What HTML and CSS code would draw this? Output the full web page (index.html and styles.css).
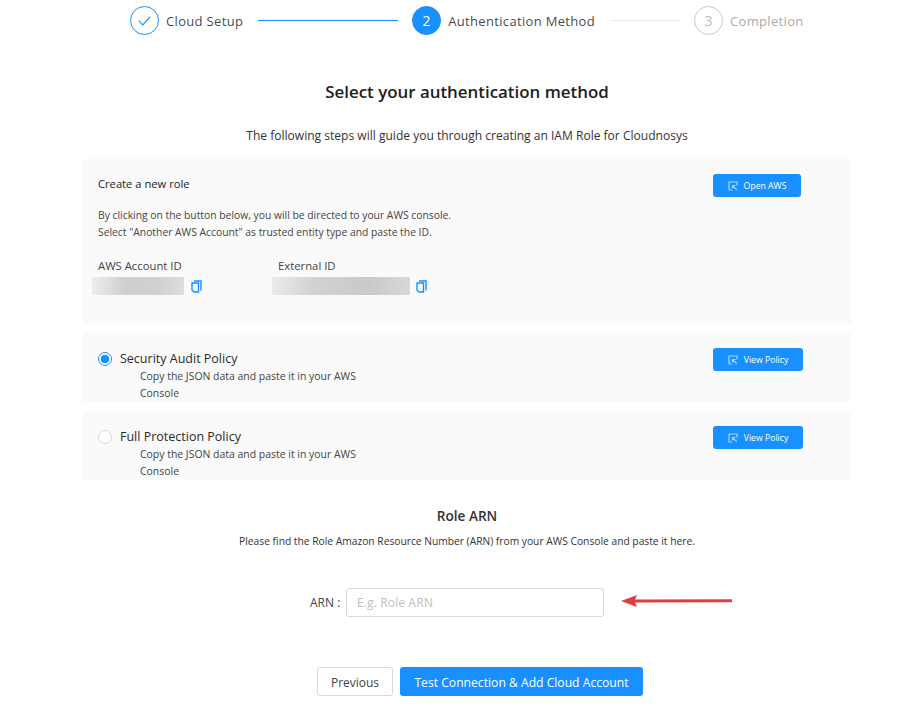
FILE: index.html
```html
<!DOCTYPE html>
<html lang="en">
<head>
<meta charset="utf-8">
<title>Select your authentication method</title>
<link rel="stylesheet" href="styles.css">
</head>
<body>
<div class="page">
  <div class="steps">
    <div class="step done">
      <span class="dot"><svg width="13" height="10" viewBox="0 0 13 10"><path d="M0.7 4.6 L4.8 8.8 L12.3 0.7" fill="none" stroke="#1890ff" stroke-width="1.2"/></svg></span>
      <span class="step-label">Cloud Setup</span>
    </div>
    <div class="line line-done"></div>
    <div class="step active">
      <span class="dot">2</span>
      <span class="step-label">Authentication Method</span>
    </div>
    <div class="line line-todo"></div>
    <div class="step todo">
      <span class="dot">3</span>
      <span class="step-label">Completion</span>
    </div>
  </div>

  <h1 class="title">Select your authentication method</h1>
  <p class="subtitle">The following steps will guide you through creating an IAM Role for Cloudnosys</p>

  <section class="panel panel-role">
    <div class="role-main">
      <h2 class="role-title">Create a new role</h2>
      <p class="role-text">By clicking on the button below, you will be directed to your AWS console.<br>Select "Another AWS Account" as trusted entity type and paste the ID.</p>
      <div class="ids">
        <div class="id-block id-account">
          <div class="id-label">AWS Account ID</div>
          <div class="id-value">
            <span class="masked masked-short"></span>
            <svg class="copy" width="11" height="13" viewBox="0 0 11 13"><path d="M3 1 H10 V10.5 M1 3 H7.5 V12 H3 L1 10 Z" fill="none" stroke="#1890ff" stroke-width="1.4"/></svg>
          </div>
        </div>
        <div class="id-block">
          <div class="id-label">External ID</div>
          <div class="id-value">
            <span class="masked masked-long"></span>
            <svg class="copy copy-ext" width="11" height="13" viewBox="0 0 11 13"><path d="M3 1 H10 V10.5 M1 3 H7.5 V12 H3 L1 10 Z" fill="none" stroke="#1890ff" stroke-width="1.4"/></svg>
          </div>
        </div>
      </div>
    </div>
    <button class="btn-small btn-aws"><svg width="10" height="10" viewBox="0 0 10 10"><path d="M4 9 H1 V1 H9 V4.5 M4.5 4.5 L8.8 8.8 M4.5 4.5 V7.5 M4.5 4.5 H7.5" fill="none" stroke="#a9d6ff" stroke-width="1.2"/></svg>Open AWS</button>
  </section>

  <section class="panel panel-policy">
    <span class="radio radio-on"></span>
    <div class="policy-body">
      <div class="policy-name">Security Audit Policy</div>
      <div class="policy-text">Copy the JSON data and paste it in your AWS<br>Console</div>
    </div>
    <button class="btn-small btn-policy"><svg width="10" height="10" viewBox="0 0 10 10"><path d="M4 9 H1 V1 H9 V4.5 M4.5 4.5 L8.8 8.8 M4.5 4.5 V7.5 M4.5 4.5 H7.5" fill="none" stroke="#a9d6ff" stroke-width="1.2"/></svg>View Policy</button>
  </section>

  <section class="panel panel-policy">
    <span class="radio"></span>
    <div class="policy-body">
      <div class="policy-name">Full Protection Policy</div>
      <div class="policy-text">Copy the JSON data and paste it in your AWS<br>Console</div>
    </div>
    <button class="btn-small btn-policy"><svg width="10" height="10" viewBox="0 0 10 10"><path d="M4 9 H1 V1 H9 V4.5 M4.5 4.5 L8.8 8.8 M4.5 4.5 V7.5 M4.5 4.5 H7.5" fill="none" stroke="#a9d6ff" stroke-width="1.2"/></svg>View Policy</button>
  </section>

  <h2 class="arn-title">Role ARN</h2>
  <p class="arn-text">Please find the Role Amazon Resource Number (ARN) from your AWS Console and paste it here.</p>

  <div class="arn-row">
    <label class="arn-label" for="arn">ARN :</label>
    <input class="arn-input" id="arn" type="text" placeholder="E.g. Role ARN">
    <svg class="arrow" width="114" height="14" viewBox="0 0 114 14"><path d="M1 7 L17 1 L15 5.4 L112 5.2 V8.2 L15 8.6 L17 13 Z" fill="#e23d3d"/></svg>
  </div>

  <div class="actions">
    <button class="btn btn-default">Previous</button>
    <button class="btn btn-primary">Test Connection &amp; Add Cloud Account</button>
  </div>
</div>
</body>
</html>
```
FILE: styles.css
```css
* { box-sizing: border-box; }
html, body { margin: 0; background: #fff; }
body {
  font-family: "Open Sans", "Noto Sans", "Liberation Sans", sans-serif;
  color: rgba(0, 0, 0, 0.75);
  font-size: 10px;
  overflow: hidden;
}
.page { width: 919px; height: 711px; padding: 6px 68px 0 83px; }

.steps { display: flex; align-items: center; height: 29px; padding-left: 47px; }
.step { display: flex; align-items: center; gap: 7px; font-size: 13px; letter-spacing: 0.33px; }
.dot {
  width: 29px; height: 29px; border-radius: 50%;
  display: flex; align-items: center; justify-content: center;
  border: 1px solid #1890ff; font-size: 14px;
}
.step.active .dot { background: #1890ff; color: #fff; }
.step.todo .dot { border-color: #c9c9c9; color: #bdbdbd; }
.step.todo .step-label { color: #a9a9a9; }
.line { height: 1px; }
.line-done { width: 140px; background: #1890ff; margin: 0 14px 0 15px; }
.line-todo { width: 69px; background: #e8e8e8; margin: 0 14px 0 16px; }

.title { margin: 46px 0 0; text-align: center; font-size: 16.9px; line-height: 22px; font-weight: 600; color: #1c1c1c; }
.subtitle { margin: 25px 0 0; text-align: center; font-size: 12.05px; line-height: 16px; color: #333; }

.panel { width: 768px; background: #fafafa; display: flex; align-items: flex-start; }
.panel-role { margin-top: 15px; height: 165px; padding: 17px 50px 0 15px; }
.role-main { flex: 1; }
.role-title { margin: 0; font-size: 11.2px; line-height: 16px; font-weight: 400; color: #222; }
.role-text { margin: 15px 0 0; font-size: 10.33px; line-height: 17px; color: #444; }
.ids { display: flex; margin-top: 17px; }
.id-block { width: 180px; }
.id-account { flex: none; }
.id-label { font-size: 11.3px; line-height: 16px; color: #444; }
.id-value { display: flex; align-items: center; gap: 7px; margin-left: -6px; margin-top: 3px; height: 18px; }
.masked { display: block; height: 18px; }
.masked-short { width: 92px; background: linear-gradient(90deg, #eeeeee, #cfcfcf 35%, #d0d0d0 70%, #dedede); }
.masked-long { width: 138px; background: linear-gradient(90deg, #ebebeb, #d2d2d2 30%, #c9c9c9 70%, #d8d8d8); }
.copy { flex: none; }
.copy-ext { margin-left: -1px; }

.btn-small {
  display: flex; align-items: center; justify-content: center; gap: 6px;
  width: 88px; height: 23px; padding: 1px 0 0;
  background: #1890ff; color: #fff; border: 0; border-radius: 3px;
  font-family: inherit; font-size: 8.7px;
}
.btn-aws { margin-top: -2px; }
.btn-policy { width: 90px; }

.panel-policy { height: 69px; padding: 15px 48px 0 15px; }
.panel-policy + .panel-policy { margin-top: 9px; }
.panel-role + .panel-policy { margin-top: 9px; }
.radio {
  flex: none; width: 14px; height: 14px; margin-top: 4px; border-radius: 50%;
  background: #fff; border: 1px solid #d9d9d9;
}
.radio-on { border-color: #1890ff; background: radial-gradient(circle, #1890ff 0 4px, #fff 4.6px); }
.policy-body { flex: 1; margin-left: 8px; padding-top: 1px; }
.policy-name { font-size: 12.5px; line-height: 19px; color: #2b2b2b; }
.policy-text { margin-left: 20px; font-size: 10.45px; line-height: 17px; color: #444; }

.arn-title { margin: 27px 0 0; text-align: center; font-size: 13.6px; line-height: 18px; font-weight: 600; color: #333; }
.arn-text { margin: 9px 0 0; text-align: center; font-size: 10.25px; line-height: 14px; color: #333; }

.arn-row { display: flex; align-items: center; margin: 40px 0 0 227px; height: 29px; }
.arn-label { width: 36px; font-size: 12px; color: #444; }
.arn-input {
  width: 258px; height: 29px; padding: 0 10px;
  border: 1px solid #d9d9d9; border-radius: 3px; background: #fff;
  font-family: inherit; font-size: 12.3px; outline: none;
}
.arn-input::placeholder { color: #bfbfbf; }
.arrow { margin-left: 16px; margin-top: -4px; }

.actions { display: flex; gap: 7px; margin: 50px 0 0 234px; }
.btn {
  height: 29px; border-radius: 3px; padding: 1px 0 0; font-family: inherit; font-size: 12.15px;
}
.btn-default { width: 76px; background: #fff; border: 1px solid #d9d9d9; color: #444; font-size: 12px; }
.btn-primary { width: 243px; background: #1890ff; border: 0; color: #fff; }
```
